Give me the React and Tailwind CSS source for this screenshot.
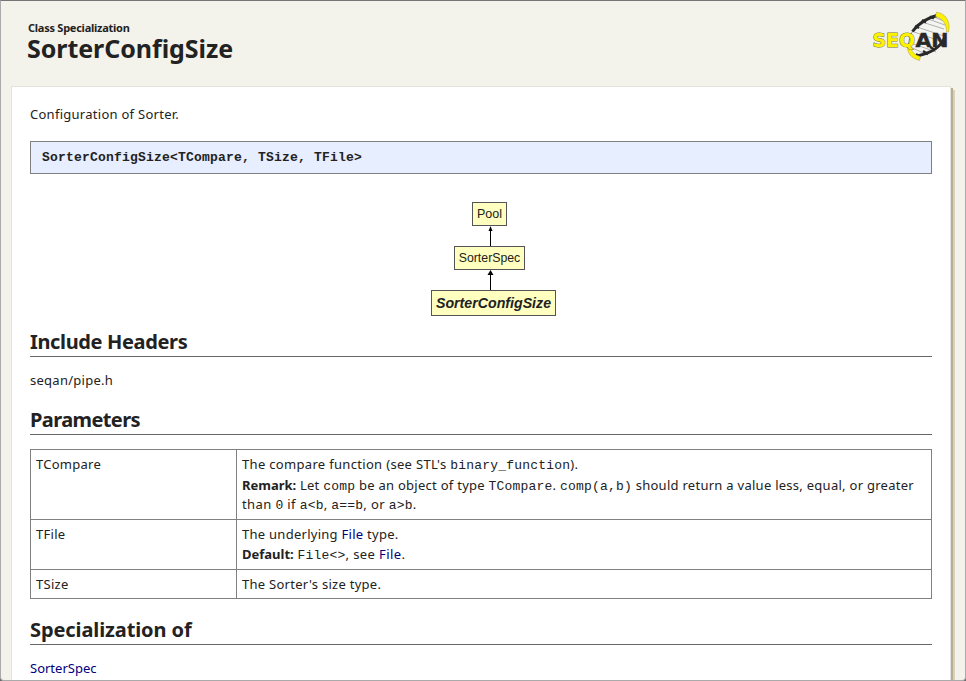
const Mono = ({ children }) => (
  <code className="font-['Liberation_Mono',monospace] text-[13px] leading-none tracking-[0.2px]">{children}</code>
);

const Link = ({ children, className = "" }) => <a className={`text-[#000080] ${className}`}>{children}</a>;

const Strong = ({ children }) => <b className="tracking-normal">{children}</b>;

const Heading = ({ children, className = "" }) => (
  <h2 className={`h-[30px] border-b border-[#666666] text-[20px] leading-[30px] font-bold whitespace-nowrap ${className}`}>{children}</h2>
);

function Logo() {
  return (
    <svg className="mt-[10px] h-[52px] w-[80px]" viewBox="870 11 80 52">
      <path d="M911 51C907 40 916 22 937 16L947 33C944 48 932 56 920 57Z" fill="#f4f4f1" />
      <path d="M922 22L944 29M917 27L944 36M934 17L944 21M928 19L945 25M911 43L936 52M910 47L928 55M914 32L943 42" stroke="#b0b0b0" strokeWidth="1" />
      <path d="M908 47C909 39 911 33 914 29" fill="none" stroke="#666" strokeWidth=".8" />
      <path d="M912.500 31.500C917 25 926 18 940 14.500" fill="none" stroke="#292929" strokeWidth="3" />
      <path d="M945 37C941 47 932 53 917 56" fill="none" stroke="#292929" strokeWidth="3" />
      <path d="M922 20l4 2.500M930 16.500l4 2M915 26l4 2M935 50l-5-3M928 54l-5-3M920 57l-4-3" stroke="#292929" strokeWidth="2.200" />
      <path d="M936.500 12.200C945 13 951 21 948.500 32L946.500 32C947 24 942 18 935.500 16.500Z" fill="#fff200" stroke="#8b8745" strokeWidth=".4" />
      <path d="M910.500 46C911 51 914 55 920.500 56.500L919.500 60.500C911 58 907 53 907.500 46Z" fill="#fff200" stroke="#8b8745" strokeWidth=".4" />
      <g className="font-['DejaVu_Sans',sans-serif] text-[20px] font-bold tracking-normal">
        <g fill="#fff200" stroke="#77742d" strokeWidth="1" paintOrder="stroke">
          <text x="872.500" y="46.500" textLength="42.500" lengthAdjust="spacingAndGlyphs">SEQ</text>
        </g>
        <text x="915.500" y="46.500" textLength="33" lengthAdjust="spacingAndGlyphs" fill="#292929" stroke="#292929" strokeWidth=".5">AN</text>
      </g>
    </svg>
  );
}

function Arrow({ small }) {
  return (
    <svg className="h-[20px] w-[9px]" viewBox="0 0 9 20">
      <path d="M5.500 2V20" stroke="#000" strokeWidth="1" />
      <path d={small ? "M5.500 0L7.500 5H3.500Z" : "M5.500 0L8.500 5H2.500Z"} />
    </svg>
  );
}

function Hierarchy() {
  const box = "flex items-center justify-center border border-[#555555] bg-[#ffffc0] font-['Liberation_Sans',sans-serif] tracking-normal whitespace-nowrap";
  return (
    <div className="mt-[28px] ml-[401px] flex w-[125px] flex-col items-center">
      <div className="flex w-[117px] flex-col items-center self-start">
        <div className={`${box} h-[24px] w-[35px] text-[12.500px]`}>Pool</div>
        <Arrow small />
        <div className={`${box} h-[24px] w-[71px] text-[12.300px]`}>SorterSpec</div>
        <Arrow />
      </div>
      <div className={`${box} h-[26px] w-[125px] text-[14.200px] font-bold italic`}>SorterConfigSize</div>
    </div>
  );
}

export default function App() {
  return (
    <div className="h-[681px] w-[966px] bg-[#666666]">
      <div className="h-[681px] w-[966px] overflow-hidden rounded-b-[4px] border border-t-[#777377] border-r-[#aaaaaa] border-b-[#aaaaaa] border-l-[#aaaaaa] bg-[#f4f3eb] font-['Noto_Sans',sans-serif] text-[13px] leading-[20px] tracking-[0.27px] text-[#222222]">
        <header className="flex h-[85px] justify-between pr-[15px] pl-[26px]">
          <div className="whitespace-nowrap">
            <div className="mt-[18px] ml-px h-[15px] text-[11px] leading-[18px] font-bold tracking-[-0.25px]">Class Specialization</div>
            <h1 className="text-[25px] leading-[28px] font-bold tracking-[-0.05px]">SorterConfigSize</h1>
          </div>
          <Logo />
        </header>
        <div className="flex h-[595px] pl-[10px]">
          <main className="w-[940px] border-t border-r border-l border-[#e2e3da] bg-white pl-[18px]">
            <div className="w-[902px]">
              <p className="mt-[17px] h-[20px]">Configuration of Sorter.</p>
              <div className="mt-[17px] flex h-[33px] items-center border border-[#808080] bg-[#e6eeff] pl-[11px] font-['Liberation_Mono',monospace] text-[13px] font-bold tracking-[0.2px]">
                SorterConfigSize&lt;TCompare, TSize, TFile&gt;
              </div>
              <Hierarchy />
              <Heading className="mt-[11px] tracking-[-0.35px]">Include Headers</Heading>
              <p className="mt-[13px]">seqan/pipe.h</p>
              <Heading className="mt-[15px] tracking-[-0.6px]">Parameters</Heading>
              <div className="mt-[14px] grid h-[150px] grid-cols-[206px_696px] grid-rows-[70px_50px_30px] whitespace-nowrap">
                <div className="border-t border-l border-[#808080] pt-[4px] pl-[5px]">TCompare</div>
                <div className="border-x border-t border-[#808080] pt-[4px] pl-[5px]">
                  <div className="h-[21px] tracking-[0.32px]">The compare function (see STL's <Mono>binary_function</Mono>).</div>
                  <div className="h-[19px]"><Strong>Remark:</Strong> Let <Mono>comp</Mono> be an object of type <Mono>TCompare</Mono>. <Mono>comp(a,b)</Mono> should return a value less, equal, or greater</div>
                  <div className="tracking-[0.4px]">than <Mono>0</Mono> if <Mono>a&lt;b</Mono>, <Mono>a==b</Mono>, or <Mono>a&gt;b</Mono>.</div>
                </div>
                <div className="border-t border-l border-[#808080] pt-[4px] pl-[5px]">TFile</div>
                <div className="border-x border-t border-[#808080] pt-[4px] pl-[5px]">
                  <div>The underlying <Link>File</Link> type.</div>
                  <div className="tracking-[0.4px]"><Strong>Default:</Strong> <Mono>File&lt;&gt;</Mono>, see <Link>File</Link>.</div>
                </div>
                <div className="border-y border-l border-[#808080] pt-[4px] pl-[5px]">TSize</div>
                <div className="border border-[#808080] pt-[4px] pl-[5px]">The Sorter's size type.</div>
              </div>
              <Heading className="mt-[16px] tracking-[-0.1px]">Specialization of</Heading>
              <p className="mt-[13px]"><Link className="tracking-normal">SorterSpec</Link></p>
            </div>
          </main>
          <div className="mt-[2px] w-[2px] bg-[#b8ae8f]" />
          <div className="mt-[4px] w-[2px] bg-[#d8d2ba]" />
        </div>
      </div>
    </div>
  );
}
